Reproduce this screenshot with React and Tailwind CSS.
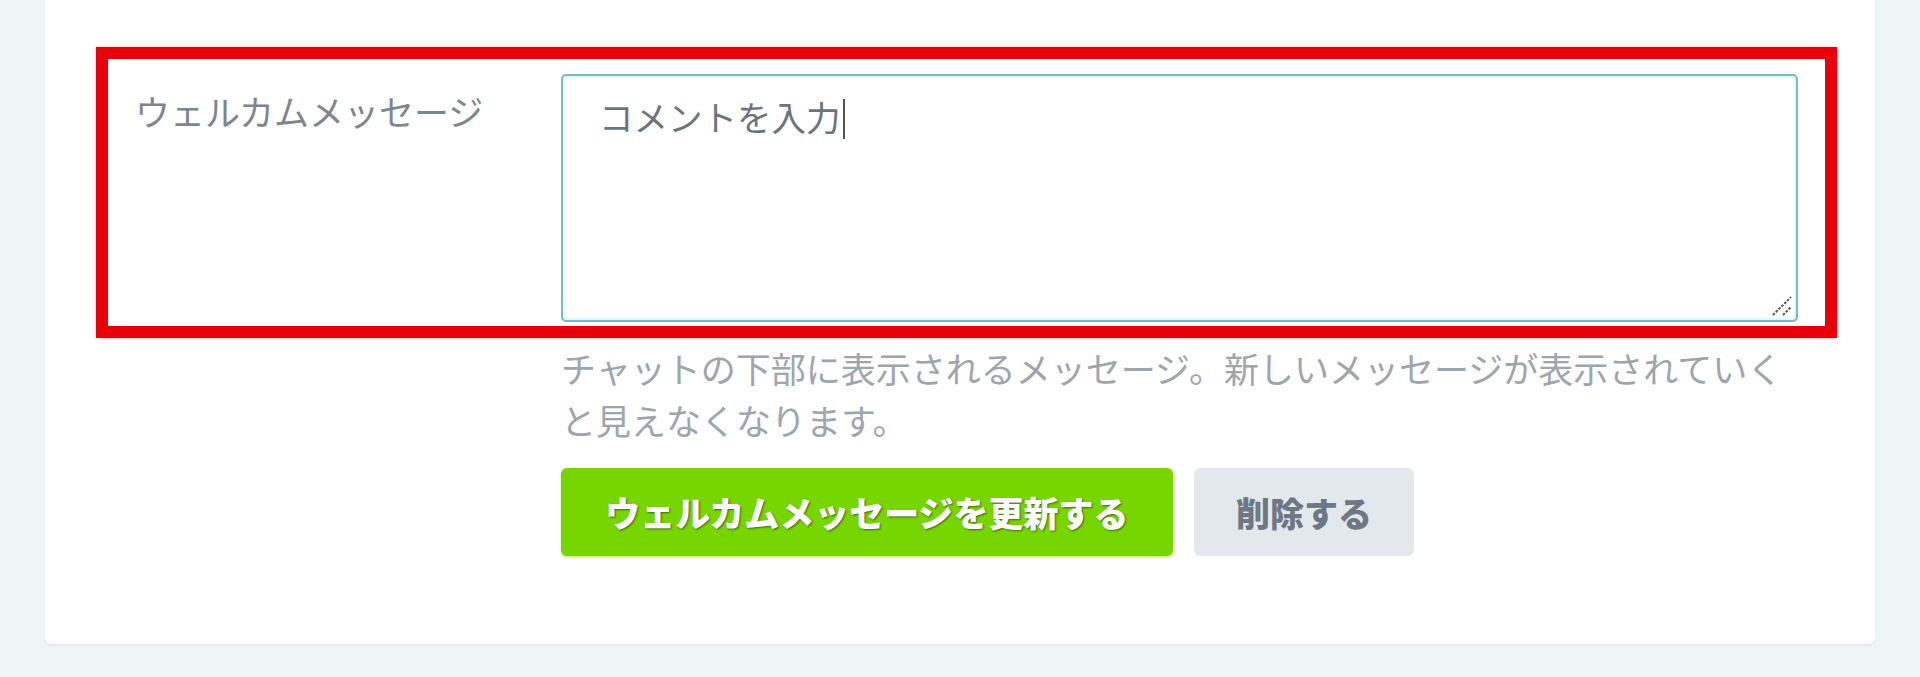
export default function App() {
  return (
    <div
      className="min-h-[677px] w-full bg-[#eff4f5] px-[45px]"
      style={{ fontFamily: '"Noto Sans CJK JP", "Noto Sans", sans-serif' }}
    >
      <div className="w-[1830px] rounded-b-[6px] bg-white pt-[47px] pl-[51px] pr-[38px] pb-[88px] shadow-[0_2px_2px_rgba(0,0,0,0.05)]">
        <div className="flex h-[291px] border-[12px] border-[#e8000a] pt-[15px] pl-[27px] pr-[27px] shadow-[0_0_3px_rgba(255,80,80,0.5)]">
          <div className="w-[426px] shrink-0 pt-[11px] text-[35px] leading-[52px] text-[#7d8690]">
            ウェルカムメッセージ
          </div>
          <div className="relative h-[248px] flex-1 rounded-[5px] border-2 border-[#7fb8c2] bg-white pt-[14px] pl-[36px] text-[34.5px] leading-[52px] text-[#6b737e] shadow-[inset_0_0_4px_rgba(130,225,245,0.7)]">
            <span>コメントを入力</span>
            <span className="ml-[2px] inline-block h-[40px] w-[2px] translate-y-[8px] bg-[#555]"></span>
            <svg
              className="absolute right-[3px] bottom-[3px]"
              width="22"
              height="22"
              viewBox="0 0 22 22"
            >
              <line x1="2" y1="20" x2="20" y2="2" stroke="#555" strokeWidth="2" strokeDasharray="2.5 1.5" />
              <line x1="12" y1="20" x2="20" y2="12" stroke="#555" strokeWidth="2" strokeDasharray="2.5 1.5" />
            </svg>
          </div>
        </div>
        <div className="pl-[465px] pr-[27px]">
          <p className="mt-[4px] text-[35px] leading-[52px] text-[#9da5ad]">
            チャットの下部に表示されるメッセージ。新しいメッセージが表示されていくと見えなくなります。
          </p>
          <div className="mt-[22px] flex gap-[21px]">
            <button className="h-[88px] w-[612px] rounded-[6px] bg-[#78d600] text-[35px] font-black text-white shadow-[0_1px_2px_rgba(170,240,40,0.9)] [text-shadow:1px_1px_2px_rgba(40,60,20,0.7)]">
              ウェルカムメッセージを更新する
            </button>
            <button className="h-[88px] w-[220px] rounded-[6px] bg-[#e3e8ed] text-[34px] font-black text-[#6e7884]">
              削除する
            </button>
          </div>
        </div>
      </div>
    </div>
  );
}
